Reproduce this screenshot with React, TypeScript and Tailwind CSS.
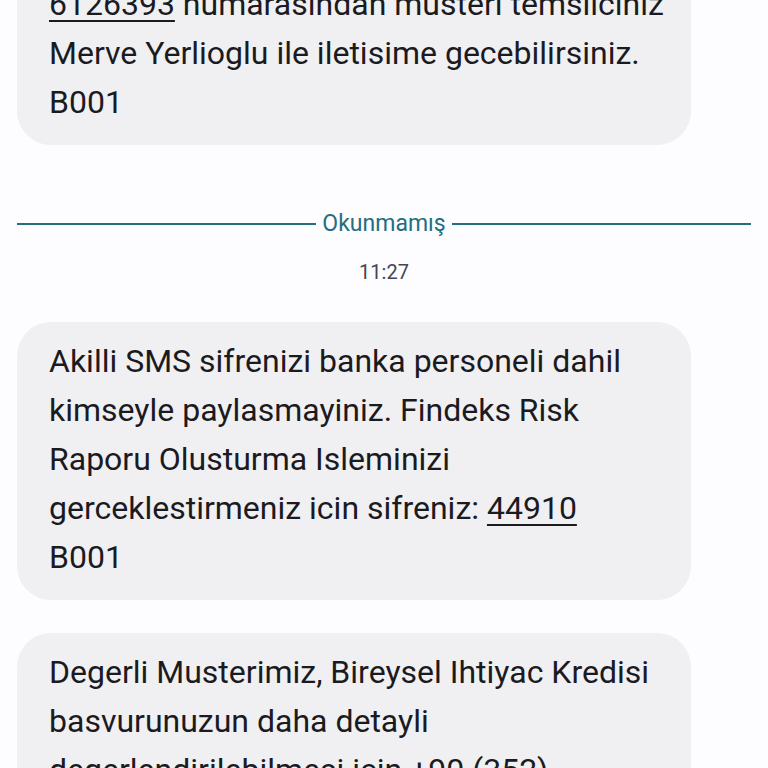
import React from 'react';

type Line = React.ReactNode;

const Num = ({ children }: { children: React.ReactNode }) => (
  <span className="underline decoration-2 underline-offset-[5px]">{children}</span>
);

const Bubble = ({ lines, className = '' }: { lines: Line[]; className?: string }) => (
  <div
    className={`w-[674px] rounded-[34px] bg-[#f0f0f3] pl-[32px] pr-[30px] pt-[15px] pb-[18px] text-[32px] leading-[49px] text-[#1b1b1f] ${className}`}
  >
    {lines.map((l, i) => (
      <div key={i} className="whitespace-nowrap">
        {l}
      </div>
    ))}
  </div>
);

export default function App() {
  return (
    <div
      className="h-[768px] w-[768px] overflow-hidden bg-[#fdfcff]"
      style={{ fontFamily: 'Roboto, "Noto Sans", sans-serif' }}
    >
      <div className="flex flex-col px-[17px]">
        <Bubble
          className="mt-[-35px]"
          lines={[
            <>
              <Num>6126393</Num> numarasindan musteri temsilciniz
            </>,
            'Merve Yerlioglu ile iletisime gecebilirsiniz.',
            'B001',
          ]}
        />

        <div className="mt-[65px] flex h-[28px] items-center gap-[6px]">
          <div className="h-[2px] flex-1 bg-[#236e80]" />
          <span className="text-[23px] leading-[28px] text-[#236e80]">Okunmamış</span>
          <div className="h-[2px] flex-1 bg-[#236e80]" />
        </div>

        <div className="mt-[20px] text-center text-[20px] leading-[28px] text-[#46464f]">11:27</div>

        <Bubble
          className="mt-[36px]"
          lines={[
            'Akilli SMS sifrenizi banka personeli dahil',
            'kimseyle paylasmayiniz. Findeks Risk',
            'Raporu Olusturma Isleminizi',
            <>
              gerceklestirmeniz icin sifreniz: <Num>44910</Num>
            </>,
            'B001',
          ]}
        />

        <Bubble
          className="mt-[33px]"
          lines={[
            'Degerli Musterimiz, Bireysel Ihtiyac Kredisi',
            'basvurunuzun daha detayli',
            'degerlendirilebilmesi icin +90 (352)',
            'numarasindan bize ulasabilirsiniz.',
          ]}
        />
      </div>
    </div>
  );
}
